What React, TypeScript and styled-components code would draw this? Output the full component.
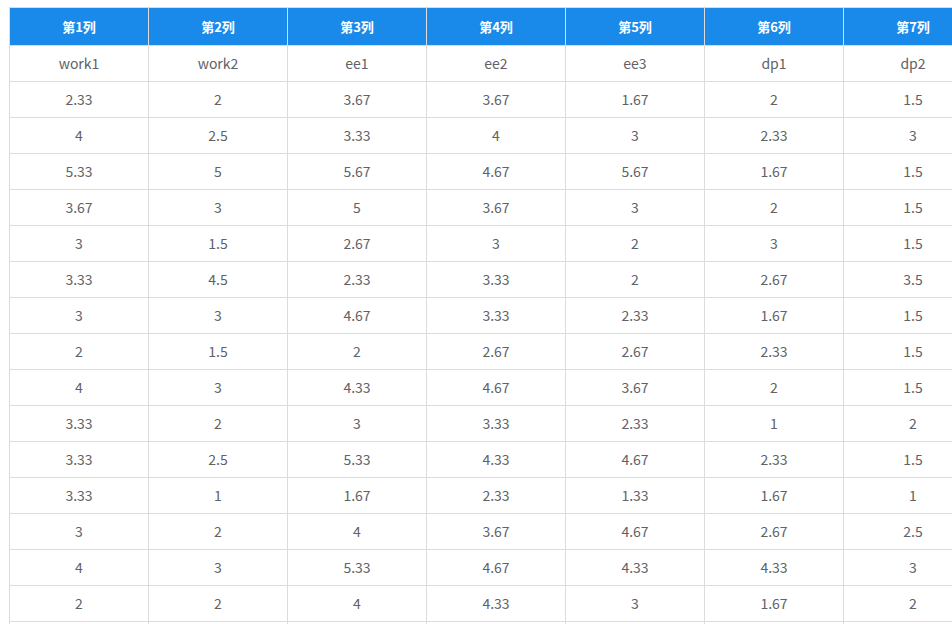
import React from "react";
import styled, { createGlobalStyle } from "styled-components";

const GlobalStyle = createGlobalStyle`
  html, body {
    margin: 0;
    padding: 0;
    background: #ffffff;
    overflow: hidden;
  }
  body {
    font-family: "Noto Sans CJK SC", "Noto Sans", sans-serif;
  }
`;

const Page = styled.div`
  padding: 7px 0 0 9px;
  width: 1100px;
`;

const Table = styled.table`
  border-collapse: collapse;
  table-layout: fixed;
  width: ${(p: { cols: number }) => p.cols * 139 + 1}px;
`;

const Col = styled.col`
  width: 139px;
`;

const HeadCell = styled.th`
  background: #1a8aea;
  color: #ffffff;
  font-size: 13px;
  font-weight: 700;
  height: 36px;
  padding: 0 0 1px;
  border: 1px solid #dcdcdc;
  text-align: center;
`;

const Cell = styled.td`
  color: #606266;
  font-size: 14px;
  height: 33px;
  padding: 0 0 2px;
  border: 1px solid #dcdcdc;
  text-align: center;
`;

const headers = ["第1列", "第2列", "第3列", "第4列", "第5列", "第6列", "第7列"];

const rows: (string | number)[][] = [
  ["work1", "work2", "ee1", "ee2", "ee3", "dp1", "dp2"],
  [2.33, 2, 3.67, 3.67, 1.67, 2, 1.5],
  [4, 2.5, 3.33, 4, 3, 2.33, 3],
  [5.33, 5, 5.67, 4.67, 5.67, 1.67, 1.5],
  [3.67, 3, 5, 3.67, 3, 2, 1.5],
  [3, 1.5, 2.67, 3, 2, 3, 1.5],
  [3.33, 4.5, 2.33, 3.33, 2, 2.67, 3.5],
  [3, 3, 4.67, 3.33, 2.33, 1.67, 1.5],
  [2, 1.5, 2, 2.67, 2.67, 2.33, 1.5],
  [4, 3, 4.33, 4.67, 3.67, 2, 1.5],
  [3.33, 2, 3, 3.33, 2.33, 1, 2],
  [3.33, 2.5, 5.33, 4.33, 4.67, 2.33, 1.5],
  [3.33, 1, 1.67, 2.33, 1.33, 1.67, 1],
  [3, 2, 4, 3.67, 4.67, 2.67, 2.5],
  [4, 3, 5.33, 4.67, 4.33, 4.33, 3],
  [2, 2, 4, 4.33, 3, 1.67, 2],
  [3, 2.5, 3.33, 3, 2.67, 2, 1.5],
];

export default function App() {
  return (
    <Page>
      <GlobalStyle />
      <Table cols={headers.length}>
        <colgroup>
          {headers.map((h) => (
            <Col key={h} />
          ))}
        </colgroup>
        <thead>
          <tr>
            {headers.map((h) => (
              <HeadCell key={h}>{h}</HeadCell>
            ))}
          </tr>
        </thead>
        <tbody>
          {rows.map((r, i) => (
            <tr key={i}>
              {r.map((v, j) => (
                <Cell key={j}>{v}</Cell>
              ))}
            </tr>
          ))}
        </tbody>
      </Table>
    </Page>
  );
}
